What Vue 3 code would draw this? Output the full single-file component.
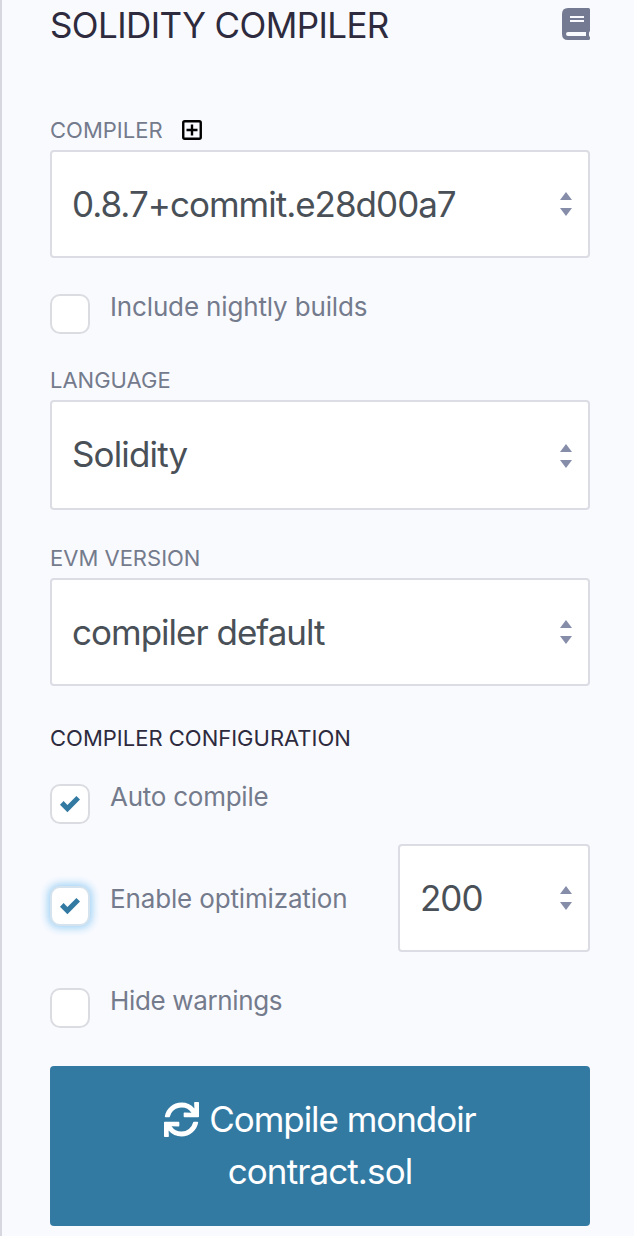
<template>
  <section class="panel">
    <header class="header">
      <h1 class="title">SOLIDITY COMPILER</h1>
      <svg class="docs-icon" viewBox="0 0 28 32" role="img" aria-label="Documentation">
        <path
          fill-rule="evenodd"
          d="M6 0H26.5Q28 0 28 1.5V22.5Q28 23.500 27.200 24.100Q26.600 26 27.200 28.200Q28 28.600 28 29.500V30.500Q28 32 26.500 32H6Q0 32 0 26V6Q0 0 6 0ZM8 8V10H22V8ZM8 12V14H22V12ZM6 24Q4 24 4 26T6 28H24V24Z"
        />
      </svg>
    </header>

    <label class="label" for="version">
      <span>COMPILER</span>
      <svg class="plus-icon" viewBox="0 0 20 20" aria-hidden="true">
        <rect x="1.25" y="1.25" width="17.5" height="17.5" rx="1.5" />
        <path d="M10 4.500V15.500M4.500 10H15.500" />
      </svg>
    </label>
    <div id="version" class="select" role="listbox">
      <span class="select__value">{{ version }}</span>
      <svg class="arrows" viewBox="0 0 12 24"><path d="M0 8L6 0L12 8ZM0 16H12L6 24Z" /></svg>
    </div>

    <div class="check check--nightly" @click="nightly = !nightly">
      <span class="check__box">
        <svg v-if="nightly" class="check__mark" viewBox="0 0 8 8"><path :d="tick" /></svg>
      </span>
      <span class="check__label">Include nightly builds</span>
    </div>

    <label class="label label--language" for="language">
      <span>LANGUAGE</span>
    </label>
    <div id="language" class="select select--language" role="listbox">
      <span class="select__value select__value--language">{{ language }}</span>
      <svg class="arrows" viewBox="0 0 12 24"><path d="M0 8L6 0L12 8ZM0 16H12L6 24Z" /></svg>
    </div>

    <label class="label label--evm" for="evm">
      <span>EVM VERSION</span>
    </label>
    <div id="evm" class="select" role="listbox">
      <span class="select__value">{{ evmVersion }}</span>
      <svg class="arrows" viewBox="0 0 12 24"><path d="M0 8L6 0L12 8ZM0 16H12L6 24Z" /></svg>
    </div>

    <h2 class="subtitle">COMPILER CONFIGURATION</h2>

    <div class="check" @click="autoCompile = !autoCompile">
      <span class="check__box">
        <svg v-if="autoCompile" class="check__mark" viewBox="0 0 8 8"><path :d="tick" /></svg>
      </span>
      <span class="check__label check__label--auto">Auto compile</span>
    </div>

    <div class="optimize">
      <div class="check check--optimize" @click="optimize = !optimize">
        <span class="check__box check__box--focus">
          <svg v-if="optimize" class="check__mark" viewBox="0 0 8 8"><path :d="tick" /></svg>
        </span>
        <span class="check__label">Enable optimization</span>
      </div>
      <div class="select select--runs">
        <span class="select__value">{{ runs }}</span>
        <svg class="arrows" viewBox="0 0 12 24"><path d="M0 8L6 0L12 8ZM0 16H12L6 24Z" /></svg>
      </div>
    </div>

    <div class="check check--warnings" @click="hideWarnings = !hideWarnings">
      <span class="check__box">
        <svg v-if="hideWarnings" class="check__mark" viewBox="0 0 8 8"><path :d="tick" /></svg>
      </span>
      <span class="check__label check__label--warnings">Hide warnings</span>
    </div>

    <button class="compile" type="button">
      <span class="compile__line">
        <svg class="compile__icon" viewBox="0 0 512 512" aria-hidden="true">
          <path
            d="M440.65 12.57l4 82.77A247.16 247.16 0 0 0 255.83 8C134.73 8 33.91 94.92 12.29 209.82A12 12 0 0 0 24.09 224h49.05a12 12 0 0 0 11.67-9.26 175.91 175.91 0 0 1 317-56.94l-101.46-4.86a12 12 0 0 0-12.57 12v47.41a12 12 0 0 0 12 12H500a12 12 0 0 0 12-12V12a12 12 0 0 0-12-12h-47.37a12 12 0 0 0-11.98 12.57zM255.83 432a175.61 175.61 0 0 1-146-77.8l101.8 4.87a12 12 0 0 0 12.57-12v-47.4a12 12 0 0 0-12-12H12a12 12 0 0 0-12 12V500a12 12 0 0 0 12 12h47.35a12 12 0 0 0 12-12.6l-4.15-82.57A247.17 247.17 0 0 0 255.83 504c121.11 0 221.93-86.92 243.55-201.82a12 12 0 0 0-11.8-14.18h-49.05a12 12 0 0 0-11.67 9.26A175.86 175.86 0 0 1 255.83 432z"
          />
        </svg>
        <span>Compile mondoir</span>
      </span>
      <span class="compile__line compile__file">contract.sol</span>
    </button>
  </section>
</template>

<script setup>
import { ref } from "vue";

const version = ref("0.8.7+commit.e28d00a7");
const language = ref("Solidity");
const evmVersion = ref("compiler default");
const runs = ref(200);

const nightly = ref(false);
const autoCompile = ref(true);
const optimize = ref(true);
const hideWarnings = ref(false);

const tick = "M6.564.750l-3.590 3.612-1.538-1.550L0 4.260 2.974 7.250 8 2.193z";
</script>

<style>
body {
  background: #f9fafe;
}
</style>

<style scoped>
.panel {
  display: flex;
  flex-direction: column;
  box-sizing: border-box;
  min-height: 1236px;
  padding: 0 44px 10px 48px;
  border-left: 2px solid #d6d7df;
  background: #f9fafe;
  color: #747b8c;
  font-family: Inter, "Liberation Sans", sans-serif;
  white-space: nowrap;
}

.header {
  display: flex;
  justify-content: space-between;
  align-items: flex-start;
  height: 110px;
}

.title {
  margin: 0;
  color: #2d2b3d;
  font-size: 35px;
  font-weight: 400;
  line-height: 51px;
  letter-spacing: -0.6px;
}

.docs-icon {
  width: 28px;
  height: 32px;
  margin-top: 8px;
  fill: #747a91;
}

.label {
  display: flex;
  align-items: center;
  height: 40px;
  font-size: 22px;
  line-height: 40px;
}

.label--language {
  margin-top: 26px;
}

.label--evm {
  margin-top: 28px;
}

.plus-icon {
  width: 20px;
  height: 20px;
  margin-left: 19px;
  fill: none;
  stroke: #000;
  stroke-width: 2.4;
}

.select {
  display: flex;
  align-items: center;
  justify-content: space-between;
  box-sizing: border-box;
  height: 108px;
  padding: 0 16px 0 20px;
  border: 2px solid #dbdce4;
  border-radius: 4px;
  background: #fff;
  color: #495057;
  font-size: 35px;
  line-height: 52px;
  letter-spacing: -1px;
}

.select__value {
  padding-bottom: 1px;
}

.select--language {
  height: 110px;
  padding-top: 1px;
}

.select__value--language {
  padding-bottom: 4px;
  letter-spacing: -0.85px;
}

.select--runs {
  width: 192px;
}

.arrows {
  width: 12px;
  height: 24px;
  fill: #868da9;
}

.check {
  display: flex;
  align-items: flex-start;
  height: 40px;
  cursor: pointer;
}

.check--nightly {
  margin-top: 36px;
}

.check--optimize {
  margin-top: 42px;
}

.check--warnings {
  margin-top: 36px;
}

.check__box {
  display: flex;
  align-items: center;
  justify-content: center;
  box-sizing: border-box;
  width: 40px;
  height: 40px;
  margin-right: 20px;
  border: 2px solid #dbdce2;
  border-radius: 10px;
  background: #fff;
}

.check__box--focus {
  border-color: #d5e3ee;
  box-shadow: 0 0 8px 2px #9bd0f5;
}

.check__mark {
  width: 20px;
  height: 20px;
  fill: #337aa3;
}

.check__label {
  font-size: 26px;
  line-height: 26px;
  letter-spacing: -0.15px;
}

.check__label--auto {
  letter-spacing: -0.25px;
}

.check__label--warnings {
  letter-spacing: -0.35px;
}

.subtitle {
  margin: 32px 0 26px;
  color: #2d2b3d;
  font-size: 22px;
  font-weight: 400;
  line-height: 40px;
}

.optimize {
  display: flex;
  justify-content: space-between;
  margin-top: 20px;
}

.compile {
  display: flex;
  flex-direction: column;
  align-items: center;
  justify-content: center;
  height: 160px;
  margin-top: 38px;
  padding: 0 0 2px;
  border: 0;
  border-radius: 4px;
  background: #337aa3;
  color: #fff;
  font-family: inherit;
  font-size: 35px;
  line-height: 52px;
  letter-spacing: -1.05px;
  cursor: pointer;
}

.compile__line {
  display: flex;
  align-items: center;
}

.compile__file {
  letter-spacing: -0.9px;
}

.compile__icon {
  width: 35px;
  height: 35px;
  margin-right: 10px;
  fill: #fff;
}
</style>
